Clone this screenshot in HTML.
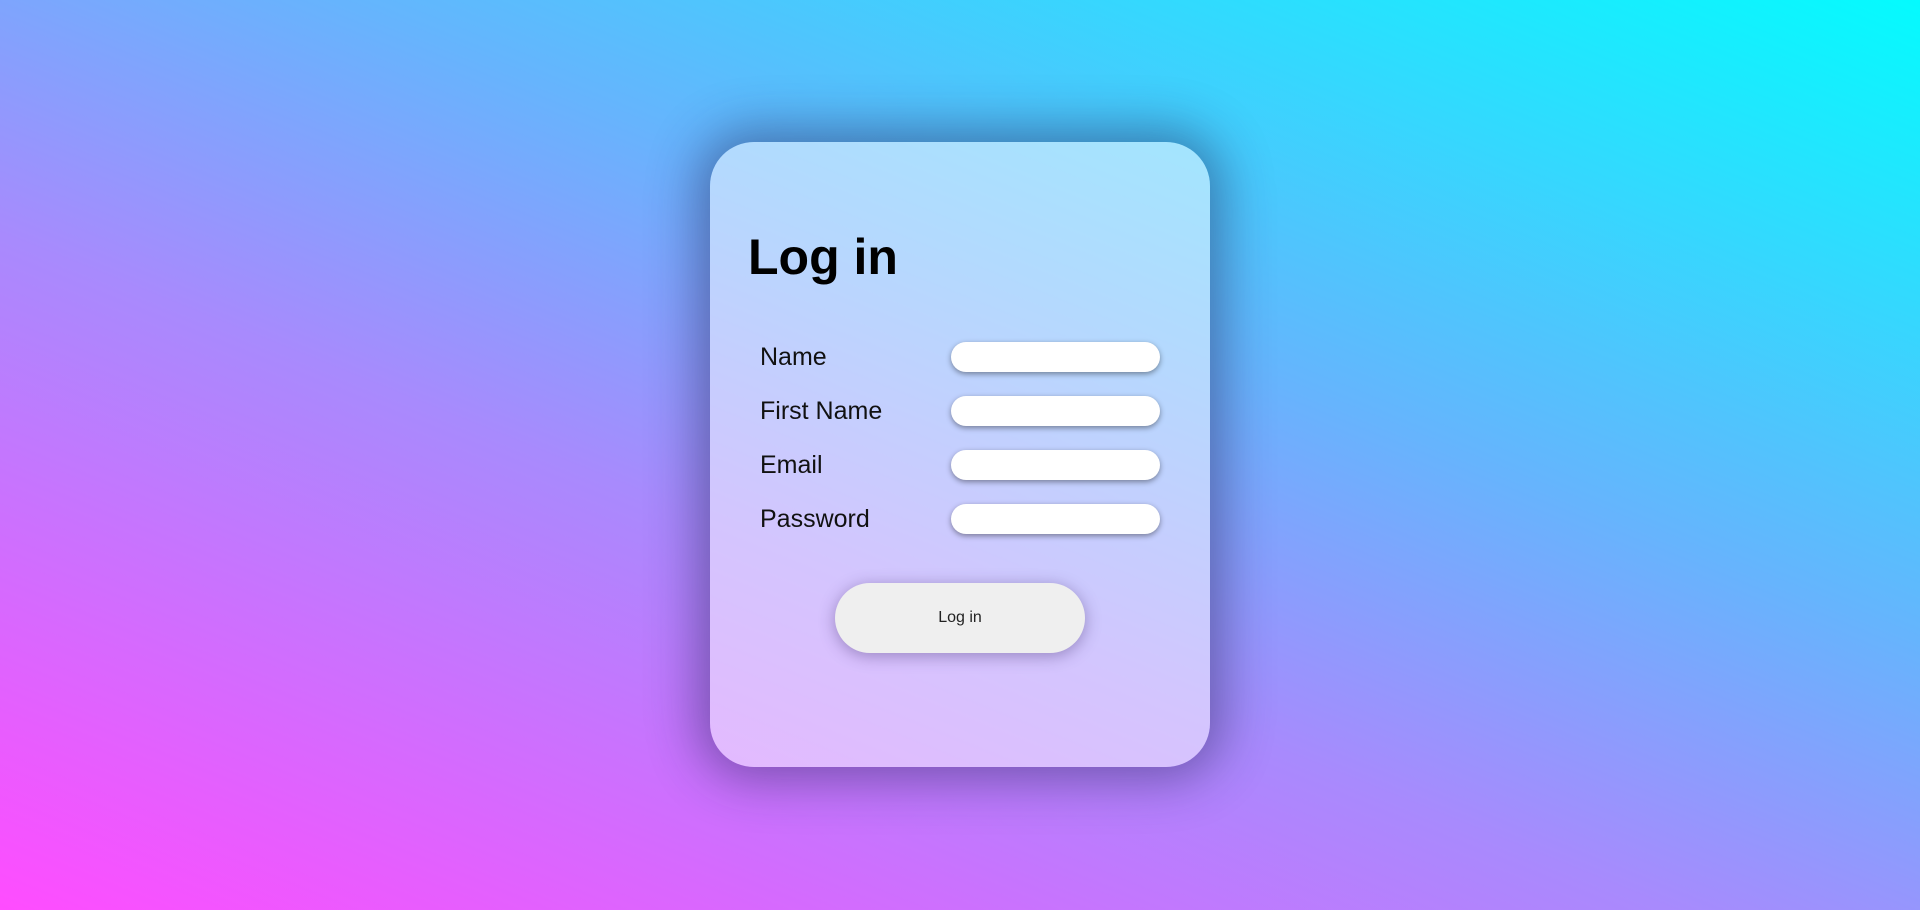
<!DOCTYPE html>
<html><head><meta charset="utf-8"><style>
html,body{margin:0;padding:0;width:1920px;height:910px;overflow:hidden}
body{background:linear-gradient(22deg,#ff4cff 0%,#a88afd 40%,#66b4fd 62%,#04fbfe 100%);font-family:"Liberation Sans",Arial,sans-serif;position:relative}
.card{position:absolute;left:710px;top:142px;width:500px;height:625px;border-radius:44px;background:rgba(255,255,255,0.5);box-shadow:0 0 50px 12px rgba(30,30,80,0.45)}
h1{position:absolute;left:38px;top:86px;margin:0;font-size:50px;font-weight:bold;color:#000}
.row{position:absolute;left:50px;width:410px;height:30px}
.row span{position:absolute;left:0;top:1px;font-size:25px;color:#111}
.row i{position:absolute;left:191px;top:0;width:209px;height:30px;border-radius:15px;background:#fff;box-shadow:0 2px 6px rgba(0,0,0,0.4)}
.btn{position:absolute;left:125px;top:441px;width:250px;height:70px;border-radius:35px;background:#efefef;box-shadow:0 3px 16px rgba(60,40,100,0.4);text-align:center;line-height:70px;font-size:16px;color:#222}
</style></head><body>
<div class="card">
<h1>Log in</h1>
<div class="row" style="top:200px"><span>Name</span><i></i></div>
<div class="row" style="top:254px"><span>First Name</span><i></i></div>
<div class="row" style="top:308px"><span>Email</span><i></i></div>
<div class="row" style="top:362px"><span>Password</span><i></i></div>
<div class="btn">Log in</div>
</div>
</body></html>
